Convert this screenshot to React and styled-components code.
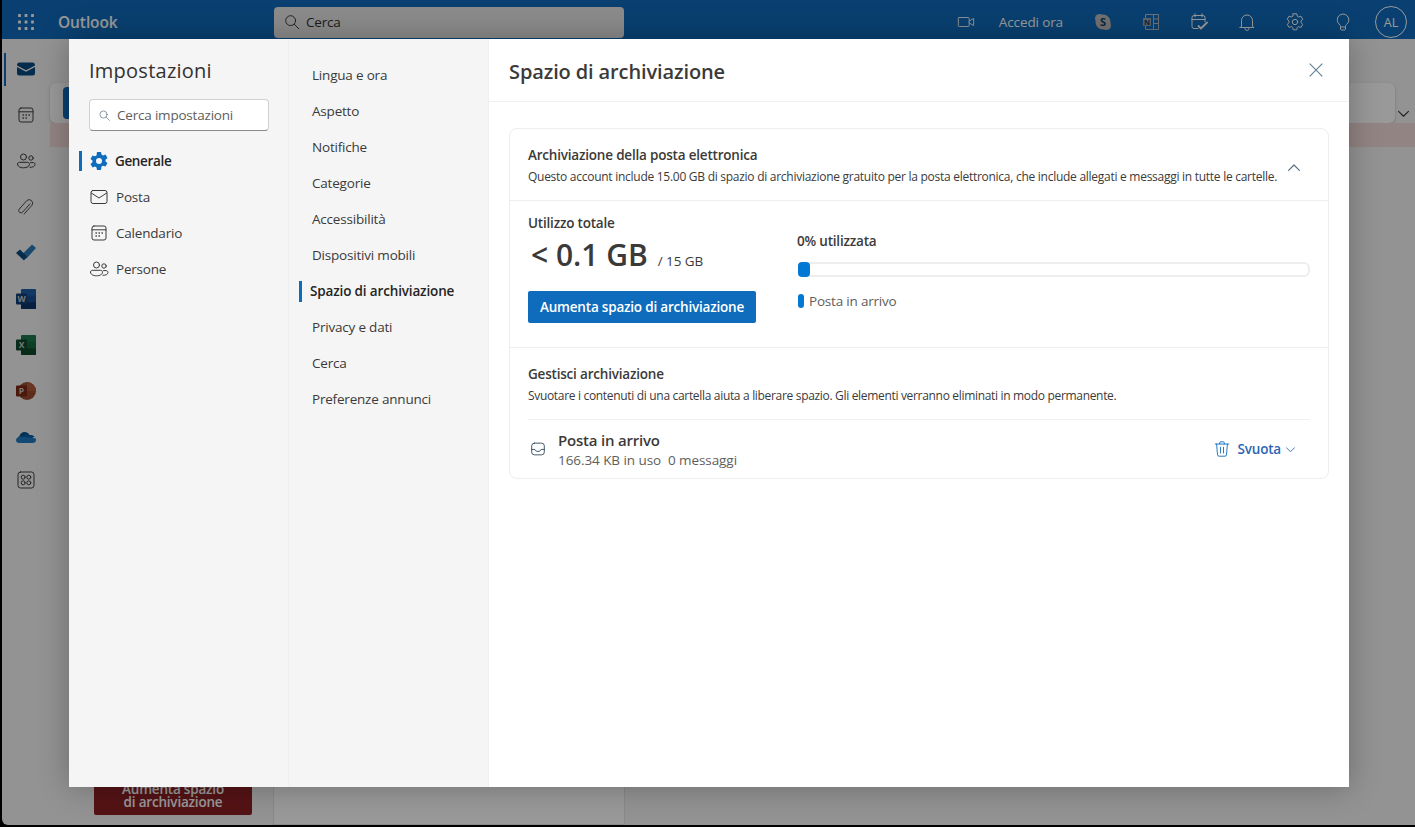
import React from "react"
import styled, { createGlobalStyle } from "styled-components"

const GlobalStyle = createGlobalStyle`
  html, body { margin: 0; padding: 0; height: 100%; overflow: hidden; background: #000; }
  body { font-family: "Open Sans", "Noto Sans", "Liberation Sans", sans-serif; color: #3b3a39; }
  * { box-sizing: border-box; }
`

const Icon = ({ size = 20, color = "currentColor", width = 1, children, className }) => (
  <svg className={className} width={size} height={size} viewBox="0 0 20 20" fill="none" stroke={color} strokeWidth={width} strokeLinecap="round" strokeLinejoin="round">
    {children}
  </svg>
)

const Mail = (p) => (
  <Icon {...p}>
    <rect x="2" y="3.500" width="16" height="13" rx="2" />
    <path d="M2.300 6 10 11l7.700-5" />
  </Icon>
)
const Calendar = (p) => (
  <Icon {...p}>
    <rect x="3" y="3" width="14" height="14" rx="2" />
    <path d="M3 6.800h14" />
    <path d="M7 10h.4M10 10h.4M13 10h.4M7 13h.4M10 13h.4" strokeWidth="1.400" />
  </Icon>
)
const People = (p) => (
  <Icon {...p}>
    <circle cx="7.500" cy="6" r="3" />
    <circle cx="15" cy="7" r="2.200" />
    <path d="M1.500 13.200c0-1.100.9-1.900 2-1.900h8c1.100 0 2 .8 2 1.900 0 2.200-2.600 3.600-6 3.600s-6-1.400-6-3.600Z" />
    <path d="M14 16.300c2.700.2 5-.9 5-2.900 0-1-.8-1.800-1.800-1.800h-2.700" />
  </Icon>
)
const Clip = (p) => (
  <Icon {...p}>
    <path d="M15.500 6.500 8.200 14.800a2.300 2.300 0 0 1-3.400-3.100l7.600-8.500a3.500 3.500 0 0 1 5.100 4.700l-7.800 8.800" transform="translate(-1.500 .3)" />
  </Icon>
)
const Magnifier = (p) => (
  <Icon {...p}>
    <circle cx="8.500" cy="8.500" r="5.500" />
    <path d="m12.500 12.500 5 5" />
  </Icon>
)
const Waffle = () => (
  <svg width="16" height="16" viewBox="0 0 16 16" fill="currentColor">
    {[1.5, 8, 14.5].flatMap((y) => [1.5, 8, 14.5].map((x) => <rect key={`${x}${y}`} x={x - 1.4} y={y - 1.4} width="2.800" height="2.800" rx=".5" />))}
  </svg>
)
const Cog = (p) => (
  <Icon {...p}>
    <circle cx="10" cy="10" r="2.700" />
    <path d="M8.200 1.800h3.600l.5 2.400 1.400.8 2.300-.8 1.800 3.100-1.800 1.600v1.800l1.800 1.600-1.800 3.100-2.300-.8-1.400.8-.5 2.400H8.200l-.5-2.400-1.400-.8-2.300.8-1.800-3.100 1.800-1.600V8.900L2.200 7.300 4 4.200l2.300.8 1.400-.8Z" />
  </Icon>
)
const SolidCog = ({ size = 20 }) => (
  <svg width={size} height={size} viewBox="0 0 20 20">
    <path fillRule="evenodd" fill="#0f6cbd" d="M8 1h4l.5 2.600 1.500.8 2.500-.9 2 3.500-2 1.700v1.700l2 1.700-2 3.500-2.500-.9-1.500.8L12 19H8l-.5-2.600-1.500-.8-2.500.9-2-3.500 2-1.700V9.600l-2-1.700 2-3.500 2.500.9 1.500-.8ZM10 7a3 3 0 1 0 0 6 3 3 0 0 0 0-6Z" />
  </svg>
)
const Inbox = (p) => (
  <Icon {...p}>
    <rect x="3" y="3.500" width="14" height="13" rx="3" />
    <path d="M3 10.500h3.500c.5 1.500 1.800 2.200 3.500 2.200s3-.7 3.500-2.200H17" />
  </Icon>
)
const Trash = (p) => (
  <Icon {...p}>
    <path d="M2.500 4.500h15M7.500 4.500V3a1 1 0 0 1 1-1h3a1 1 0 0 1 1 1v1.500" />
    <path d="m4 4.500 1 12a1.800 1.800 0 0 0 1.800 1.500h6.400A1.800 1.800 0 0 0 15 16.500l1-12" />
    <path d="M8.300 8v6.500M11.700 8v6.500" />
  </Icon>
)
const Chevron = ({ up, size = 10, color = "currentColor" }) => (
  <svg width={size} height={size} viewBox="0 0 10 10" fill="none" stroke={color} strokeWidth="1" strokeLinecap="round" strokeLinejoin="round">
    <path d={up ? "M.5 7 5 2.500 9.500 7" : "M.5 3 5 7.500 9.500 3"} />
  </svg>
)
const Close = () => (
  <svg width="14" height="14" viewBox="0 0 14 14" fill="none" stroke="#5f7f95" strokeWidth="1.100">
    <path d="m.7.7 12.600 12.600M13.300.7.700 13.300" />
  </svg>
)
const Video = (p) => (
  <Icon {...p}>
    <rect x="1.500" y="5" width="12" height="10" rx="1" />
    <path d="m13.500 9 5-3v8l-5-3" />
  </Icon>
)
const Skype = () => (
  <svg width="18" height="18" viewBox="0 0 18 18">
    <circle cx="5.500" cy="5.500" r="4.500" fill="#bdbdbd" />
    <circle cx="12.500" cy="12.500" r="4.500" fill="#bdbdbd" />
    <circle cx="9" cy="9" r="7.500" fill="#bdbdbd" />
    <text x="9" y="13" textAnchor="middle" fontSize="11" fontWeight="700" fill="#094071" fontFamily="Open Sans">S</text>
  </svg>
)
const OneNote = () => (
  <svg width="18" height="18" viewBox="0 0 18 18" fill="none" stroke="#b4bdc5">
    <path d="M3.500 1.500h13v15h-13Z" />
    <path d="M11.500 1.500v15M11.500 6h5M11.500 10.500h5" />
    <rect x="1" y="5" width="8" height="8" fill="#9aa6af" stroke="none" />
    <text x="5" y="11.700" textAnchor="middle" fontSize="7.500" fontWeight="700" fill="#094071" stroke="none" fontFamily="Open Sans">N</text>
  </svg>
)
const TodoCal = (p) => (
  <Icon {...p}>
    <path d="M9 16.500H5a2 2 0 0 1-2-2v-9a2 2 0 0 1 2-2h9a2 2 0 0 1 2 2v4" />
    <path d="M3 7.500h13M6 1.800v3M13 1.800v3" />
    <path d="m9.500 14 2.500 2.500 6-6" strokeWidth="1.800" />
  </Icon>
)
const Bell = (p) => (
  <Icon {...p}>
    <path d="M4.500 14.500V8.500a5.500 5.500 0 0 1 11 0v6l1.500 1H3Z" />
    <path d="M8 16.500a2 2 0 0 0 4 0" />
  </Icon>
)
const Bulb = (p) => (
  <Icon {...p}>
    <path d="M6.500 12.500a5.800 5.800 0 1 1 7 0c-.6.5-1 1.200-1 2V17a1 1 0 0 1-1 1h-3a1 1 0 0 1-1-1v-2.500c0-.8-.4-1.500-1-2Z" />
    <path d="M7.500 15h5" />
  </Icon>
)
const Apps = (p) => (
  <Icon {...p}>
    <rect x="2" y="2" width="16" height="16" rx="2.500" />
    <circle cx="7.200" cy="7.200" r="2" />
    <circle cx="12.800" cy="7.200" r="2" />
    <circle cx="7.200" cy="12.800" r="2" />
    <circle cx="12.800" cy="12.800" r="2" />
  </Icon>
)
const Todo = () => (
  <svg width="20" height="20" viewBox="0 0 20 20">
    <path d="M6.500 11 16 1.500l4 3.500-10 11Z" fill="#2a7ab5" />
    <path d="M0 10 4 6.500l7 7-3 4Z" fill="#0b4a80" />
  </svg>
)
const OfficeDoc = ({ letter, back, mid, front, dark }) => (
  <svg width="20" height="20" viewBox="0 0 20 20">
    <rect x="5" y="0" width="15" height="20" rx="1" fill={back} />
    <rect x="5" y="6.700" width="15" height="6.600" fill={mid} />
    <rect x="5" y="13.300" width="15" height="6.700" rx="1" fill={dark} />
    <rect x="0" y="4.500" width="11" height="11" rx="1" fill={front} />
    <text x="5.500" y="13" textAnchor="middle" fontSize="8.500" fontWeight="700" fill="#c9c9c9" fontFamily="Open Sans">{letter}</text>
  </svg>
)
const PowerPoint = () => (
  <svg width="20" height="20" viewBox="0 0 20 20">
    <circle cx="11" cy="10" r="9" fill="#9c4a30" />
    <path d="M11 1a9 9 0 0 1 9 9h-9Z" fill="#b05a3c" />
    <rect x="0" y="4.500" width="11" height="11" rx="1" fill="#7d2a14" />
    <text x="5.500" y="13" textAnchor="middle" fontSize="8.500" fontWeight="700" fill="#c9c9c9" fontFamily="Open Sans">P</text>
  </svg>
)
const OneDrive = () => (
  <svg width="20" height="20" viewBox="0 0 20 20">
    <path d="M3 10c.5-3 3-5 5.500-5 2.200 0 4 1.200 5 3l-4 4-6.500 3Z" fill="#0a4f8c" />
    <path d="M7 9c2-2 4.500-2.500 6.500-1 .5 0 3-.5 5 1.500L12 14 7 12Z" fill="#0b5ea6" />
    <path d="M3.500 9.500C1.500 10 0 11.500 0 13c0 1.700 1.300 3 3 3h13.500c2 0 3.500-1.300 3.500-3 0-.7-.2-1.300-.5-1.800L3.500 9.500Z" fill="#1f7cc4" />
  </svg>
)

const railItems = [
  { key: "mail", node: <svg width="20" height="20" viewBox="0 0 20 20"><path fill="#0b4a80" d="M1 6a2.500 2.500 0 0 1 2.500-2.500h13A2.500 2.500 0 0 1 19 6v.4l-9 4.800-9-4.800Z" /><path fill="#0b4a80" d="M1 8l9 4.800L19 8v6a2.500 2.500 0 0 1-2.500 2.500h-13A2.500 2.500 0 0 1 1 14Z" /></svg>, active: true },
  { key: "cal", node: <Calendar color="#3f3f3f" /> },
  { key: "people", node: <People color="#3f3f3f" /> },
  { key: "clip", node: <Clip color="#4a4a4a" /> },
  { key: "todo", node: <Todo /> },
  { key: "word", node: <OfficeDoc letter="W" back="#1f5fa8" mid="#174d8f" dark="#0e3569" front="#123f78" /> },
  { key: "excel", node: <OfficeDoc letter="X" back="#1f7a4d" mid="#176a41" dark="#0f4a2c" front="#0e4a2a" /> },
  { key: "ppt", node: <PowerPoint /> },
  { key: "drive", node: <OneDrive /> },
  { key: "apps", node: <Apps color="#3f3f3f" size={20} /> },
]

const mainNav = [
  { label: "Generale", icon: <SolidCog />, active: true },
  { label: "Posta", icon: <Mail /> },
  { label: "Calendario", icon: <Calendar /> },
  { label: "Persone", icon: <People /> },
]

const subNav = [
  "Lingua e ora",
  "Aspetto",
  "Notifiche",
  "Categorie",
  "Accessibilità",
  "Dispositivi mobili",
  "Spazio di archiviazione",
  "Privacy e dati",
  "Cerca",
  "Preferenze annunci",
]

const topActions = [<Skype key="s" />, <OneNote key="n" />, <TodoCal key="t" />, <Bell key="b" />, <Cog key="c" />, <Bulb key="l" />]

export default function App() {
  return (
    <Frame>
      <GlobalStyle />
      <Shell>
        <TopBar>
          <WaffleButton><Waffle /></WaffleButton>
          <Brand>Outlook</Brand>
          <TopSearch>
            <Magnifier size={18} color="#2b2b2b" />
            <span>Cerca</span>
          </TopSearch>
          <TopRight>
            <MeetNow>
              <Video size={18} />
              <span>Accedi ora</span>
            </MeetNow>
            {topActions.map((a) => (
              <TopAction key={a.key}>{a}</TopAction>
            ))}
            <Avatar>AL</Avatar>
          </TopRight>
        </TopBar>
        <Workspace>
          <Rail>
            {railItems.map((r) => (
              <RailItem key={r.key} $active={r.active}>{r.node}</RailItem>
            ))}
          </Rail>
          <MailArea>
            <RibbonRow>
              <Ribbon><RibbonTab /></Ribbon>
              <Chevron size={11} color="#3a3540" />
            </RibbonRow>
            <WarningBand />
            <Panes>
              <FolderPane>
                <UpgradeButton>Aumenta spazio<br />di archiviazione</UpgradeButton>
              </FolderPane>
              <MessagePane />
            </Panes>
          </MailArea>
        </Workspace>
      </Shell>
      <Dim />
      <Dialog>
        <MainColumn>
          <DialogTitle>Impostazioni</DialogTitle>
          <SettingsSearch>
            <Magnifier size={13} color="#4f6b80" />
            <span>Cerca impostazioni</span>
          </SettingsSearch>
          <MainList>
            {mainNav.map((n) => (
              <MainRow key={n.label} $active={n.active}>
                {n.icon}
                <span>{n.label}</span>
              </MainRow>
            ))}
          </MainList>
        </MainColumn>
        <SubColumn>
          {subNav.map((label) => (
            <SubRow key={label} $active={label === "Spazio di archiviazione"}>{label}</SubRow>
          ))}
        </SubColumn>
        <Content>
          <ContentHeader>
            <ContentTitle>Spazio di archiviazione</ContentTitle>
            <CloseButton><Close /></CloseButton>
          </ContentHeader>
          <ContentBody>
            <Card>
              <CardHead>
                <div>
                  <SectionTitle>Archiviazione della posta elettronica</SectionTitle>
                  <SectionText>Questo account include 15.00 GB di spazio di archiviazione gratuito per la posta elettronica, che include allegati e messaggi in tutte le cartelle.</SectionText>
                </div>
                <CollapseToggle><Chevron up size={12} color="#5b7184" /></CollapseToggle>
              </CardHead>
              <Usage>
                <UsageLeft>
                  <SectionTitle>Utilizzo totale</SectionTitle>
                  <Amount>
                    <Big>&lt; 0.1 GB</Big>
                    <Quota>/ 15 GB</Quota>
                  </Amount>
                  <PrimaryButton>Aumenta spazio di archiviazione</PrimaryButton>
                </UsageLeft>
                <UsageRight>
                  <SectionTitle>0% utilizzata</SectionTitle>
                  <Track>
                    <Fill style={{ width: 12 }} />
                  </Track>
                  <Legend>
                    <LegendDot />
                    <span>Posta in arrivo</span>
                  </Legend>
                </UsageRight>
              </Usage>
              <Manage>
                <SectionTitle>Gestisci archiviazione</SectionTitle>
                <ManageText>Svuotare i contenuti di una cartella aiuta a liberare spazio. Gli elementi verranno eliminati in modo permanente.</ManageText>
                <FolderRow>
                  <Inbox size={18} color="#2f4a5e" />
                  <FolderInfo>
                    <FolderName>Posta in arrivo</FolderName>
                    <FolderMeta>166.34 KB in uso&nbsp;&nbsp;0 messaggi</FolderMeta>
                  </FolderInfo>
                  <EmptyButton>
                    <Trash size={18} color="#0f6cbd" />
                    <span>Svuota</span>
                    <Chevron size={9} color="#2b66b5" />
                  </EmptyButton>
                </FolderRow>
              </Manage>
            </Card>
          </ContentBody>
        </Content>
      </Dialog>
    </Frame>
  )
}

const Frame = styled.div`
  position: relative;
  width: 1415px;
  height: 827px;
  background: #000;
  overflow: hidden;
  padding: 0 0 2px 2px;
`

const Shell = styled.div`
  display: flex;
  flex-direction: column;
  height: 100%;
  background: #f5f5f5;
  border-bottom-left-radius: 6px;
  overflow: hidden;
`

const TopBar = styled.header`
  display: flex;
  align-items: center;
  height: 39px;
  flex: none;
  background: #0f6cbd;
  color: #fff;
  padding-top: 5px;
`

const WaffleButton = styled.div`
  display: flex;
  justify-content: center;
  width: 48px;
`

const Brand = styled.div`
  font-size: 15.5px;
  font-weight: 600;
  margin-left: 8px;
  letter-spacing: -0.1px;
  width: 216px;
`

const TopSearch = styled.div`
  display: flex;
  align-items: center;
  gap: 5px;
  width: 350px;
  height: 31px;
  padding-left: 9px;
  border-radius: 4px;
  background: #e8e8e8;
  color: #323130;
  font-size: 13.5px;
  letter-spacing: -0.2px;
`

const TopRight = styled.div`
  display: flex;
  align-items: center;
  margin-left: auto;
  padding-right: 8px;
`

const MeetNow = styled.div`
  display: flex;
  align-items: center;
  gap: 24px;
  font-size: 13.5px;
  letter-spacing: -0.12px;
  margin-right: 16px;
  svg { margin-left: -1px; }
`

const TopAction = styled.div`
  display: flex;
  align-items: center;
  justify-content: center;
  width: 48px;
`

const Avatar = styled.div`
  display: flex;
  align-items: center;
  justify-content: center;
  width: 32px;
  height: 32px;
  margin-left: 8px;
  border-radius: 50%;
  border: 1px solid #fff;
  font-size: 12.5px;
`

const Workspace = styled.div`
  display: flex;
  flex: 1;
  min-height: 0;
`

const Rail = styled.nav`
  display: flex;
  flex-direction: column;
  width: 46px;
  flex: none;
  padding-top: 7px;
`

const RailItem = styled.div`
  position: relative;
  display: flex;
  align-items: center;
  justify-content: center;
  height: 46px;
  padding-left: 2px;
  &:last-child { margin-top: -3px; }
  ${(p) => p.$active && `
    &::before {
      content: "";
      position: absolute;
      left: 2px;
      top: 7px;
      width: 2px;
      height: 33px;
      background: #0f6cbd;
    }
  `}
`

const MailArea = styled.main`
  display: flex;
  flex-direction: column;
  flex: 1;
  min-width: 0;
  padding-top: 44px;
`

const RibbonRow = styled.div`
  display: flex;
  align-items: flex-end;
  gap: 3px;
  padding-left: 2px;
  height: 40px;
  flex: none;
  svg { margin-bottom: 4px; }
`

const Ribbon = styled.div`
  display: flex;
  align-items: center;
  width: 1345px;
  height: 40px;
  padding-left: 13px;
  background: #fff;
  border-radius: 6px;
  box-shadow: 0 1px 3px rgba(0, 0, 0, 0.2);
`

const RibbonTab = styled.div`
  width: 30px;
  height: 32px;
  border-radius: 4px;
  background: #0f6cbd;
`

const WarningBand = styled.div`
  height: 24px;
  flex: none;
  margin-left: 2px;
  background: #f3dcda;
`

const Panes = styled.div`
  display: flex;
  flex: 1;
  min-height: 0;
`

const FolderPane = styled.div`
  display: flex;
  align-items: flex-end;
  width: 225px;
  flex: none;
  padding: 0 0 10px 46px;
`

const UpgradeButton = styled.div`
  width: 158px;
  height: 38px;
  padding-top: 6px;
  border-radius: 2px;
  background: #8c2024;
  color: #fff;
  font-size: 13.5px;
  font-weight: 600;
  line-height: 13px;
  text-align: center;
  letter-spacing: -0.2px;
`

const MessagePane = styled.div`
  width: 352px;
  background: #fff;
  border: 1px solid #e4e4e4;
  border-top: none;
`

const Dim = styled.div`
  position: absolute;
  inset: 0;
  background: rgba(0, 0, 0, 0.4);
`

const Dialog = styled.section`
  position: absolute;
  left: 69px;
  top: 39px;
  display: flex;
  width: 1280px;
  height: 748px;
  background: #fff;
  box-shadow: 0 0 30px rgba(0, 0, 0, 0.28);
`

const MainColumn = styled.div`
  width: 220px;
  flex: none;
  padding: 18px 0 0 20px;
  background: #f5f5f5;
  border-right: 1px solid #f0f0f0;
`

const DialogTitle = styled.h2`
  margin: 0;
  font-size: 20px;
  font-weight: 500;
  line-height: 28px;
  letter-spacing: 0.25px;
  color: #323130;
`

const SettingsSearch = styled.div`
  display: flex;
  align-items: center;
  gap: 6px;
  width: 180px;
  height: 32px;
  margin-top: 14px;
  padding-left: 8px;
  background: #fff;
  border: 1px solid #d1d1d1;
  border-bottom-color: #8a8a8a;
  border-radius: 4px;
  font-size: 13.5px;
  letter-spacing: -0.2px;
  color: #605e5c;
`

const MainList = styled.div`
  margin-top: 12px;
`

const MainRow = styled.div`
  position: relative;
  display: flex;
  align-items: center;
  gap: 7px;
  height: 36px;
  font-size: 13.5px;
  letter-spacing: ${(p) => (p.$active ? "-0.35px" : "-0.2px")};
  color: ${(p) => (p.$active ? "#242424" : "#3b3a39")};
  font-weight: ${(p) => (p.$active ? 600 : 400)};
  span { margin-left: ${(p) => (p.$active ? "-1px" : "0")}; }
  ${(p) => p.$active && `
    &::before {
      content: "";
      position: absolute;
      left: -10px;
      top: 8px;
      width: 3px;
      height: 20px;
      background: #0f6cbd;
    }
  `}
`

const SubColumn = styled.div`
  width: 200px;
  flex: none;
  padding-top: 18px;
  background: #f5f5f5;
  border-right: 1px solid #f0f0f0;
`

const SubRow = styled.div`
  position: relative;
  display: flex;
  align-items: center;
  height: 36px;
  padding-left: ${(p) => (p.$active ? "21px" : "23px")};
  font-size: 13.5px;
  letter-spacing: ${(p) => (p.$active ? "-0.15px" : "-0.2px")};
  color: ${(p) => (p.$active ? "#242424" : "#3b3a39")};
  font-weight: ${(p) => (p.$active ? 600 : 400)};
  ${(p) => p.$active && `
    &::before {
      content: "";
      position: absolute;
      left: 10px;
      top: 8px;
      width: 3px;
      height: 21px;
      background: #0f6cbd;
    }
  `}
`

const Content = styled.div`
  display: flex;
  flex-direction: column;
  flex: 1;
  min-width: 0;
`

const ContentHeader = styled.div`
  display: flex;
  align-items: center;
  justify-content: space-between;
  height: 63px;
  padding: 2px 26px 0 20px;
  border-bottom: 1px solid #f0f0f0;
`

const ContentTitle = styled.h2`
  margin: 0;
  font-size: 20px;
  font-weight: 600;
  letter-spacing: -0.12px;
  color: #3b3a39;
`

const CloseButton = styled.div`
  display: flex;
  margin-top: -3px;
`

const ContentBody = styled.div`
  padding: 26px 20px 0;
`

const Card = styled.div`
  border: 1px solid #eeeeee;
  border-radius: 8px;
`

const CardHead = styled.div`
  display: flex;
  align-items: center;
  justify-content: space-between;
  height: 72px;
  padding: 1px 28px 0 18px;
  border-bottom: 1px solid #eeeeee;
`

const CollapseToggle = styled.div`
  display: flex;
  margin-top: 5px;
`

const SectionTitle = styled.div`
  font-size: 13.5px;
  font-weight: 600;
  line-height: 20px;
  letter-spacing: -0.2px;
  color: #3b3a39;
`

const SectionText = styled.div`
  font-size: 12px;
  line-height: 16px;
  margin-top: 4px;
  letter-spacing: -0.27px;
  white-space: nowrap;
  color: #3b3a39;
`

const Usage = styled.div`
  display: flex;
  height: 147px;
  border-bottom: 1px solid #eeeeee;
  padding: 12px 18px 0;
`

const UsageLeft = styled.div`
  width: 269px;
  flex: none;
`

const Amount = styled.div`
  display: flex;
  align-items: baseline;
  gap: 10px;
  height: 38px;
  margin-top: 3px;
  padding-left: 3px;
`

const Big = styled.div`
  font-size: 30px;
  font-weight: 600;
  line-height: 38px;
  letter-spacing: 0;
  color: #3b3a39;
`

const Quota = styled.div`
  font-size: 13.5px;
  letter-spacing: -0.1px;
  color: #3b3a39;
`

const PrimaryButton = styled.div`
  display: flex;
  align-items: center;
  justify-content: center;
  width: 228px;
  height: 32px;
  margin-top: 17px;
  border-radius: 2px;
  background: #0f6cbd;
  color: #fff;
  font-size: 13.5px;
  font-weight: 600;
  letter-spacing: -0.2px;
`

const UsageRight = styled.div`
  flex: 1;
  padding-top: 18px;
`

const Track = styled.div`
  width: 512px;
  height: 15px;
  margin: 11px 0 0 1px;
  border: 2px solid #eeeeee;
  border-left: none;
  border-radius: 6px;
`

const Fill = styled.div`
  height: 15px;
  margin-top: -2px;
  border-radius: 4px;
  background: #0078d4;
`

const Legend = styled.div`
  display: flex;
  align-items: center;
  gap: 5px;
  margin: 15px 0 0 1px;
  font-size: 13.5px;
  letter-spacing: -0.2px;
  color: #605e5c;
`

const LegendDot = styled.div`
  width: 6px;
  height: 14px;
  border-radius: 3px;
  background: #0078d4;
`

const Manage = styled.div`
  padding: 16px 18px 0;
`

const ManageText = styled(SectionText)`
  letter-spacing: -0.32px;
`

const FolderRow = styled.div`
  display: flex;
  align-items: center;
  height: 59px;
  margin-top: 15px;
  padding: 0 15px 0 1px;
  border-top: 1px solid #f0f0f0;
`

const FolderInfo = styled.div`
  margin-left: 11px;
  flex: 1;
`

const FolderName = styled.div`
  font-size: 15px;
  font-weight: 600;
  line-height: 21px;
  letter-spacing: -0.2px;
  color: #3b3a39;
`

const FolderMeta = styled.div`
  font-size: 13.5px;
  line-height: 18px;
  letter-spacing: -0.07px;
  color: #605e5c;
`

const EmptyButton = styled.div`
  display: flex;
  align-items: center;
  gap: 7px;
  font-size: 13.5px;
  font-weight: 600;
  letter-spacing: -0.2px;
  color: #2b66b5;
  span { margin-right: -2px; }
`
